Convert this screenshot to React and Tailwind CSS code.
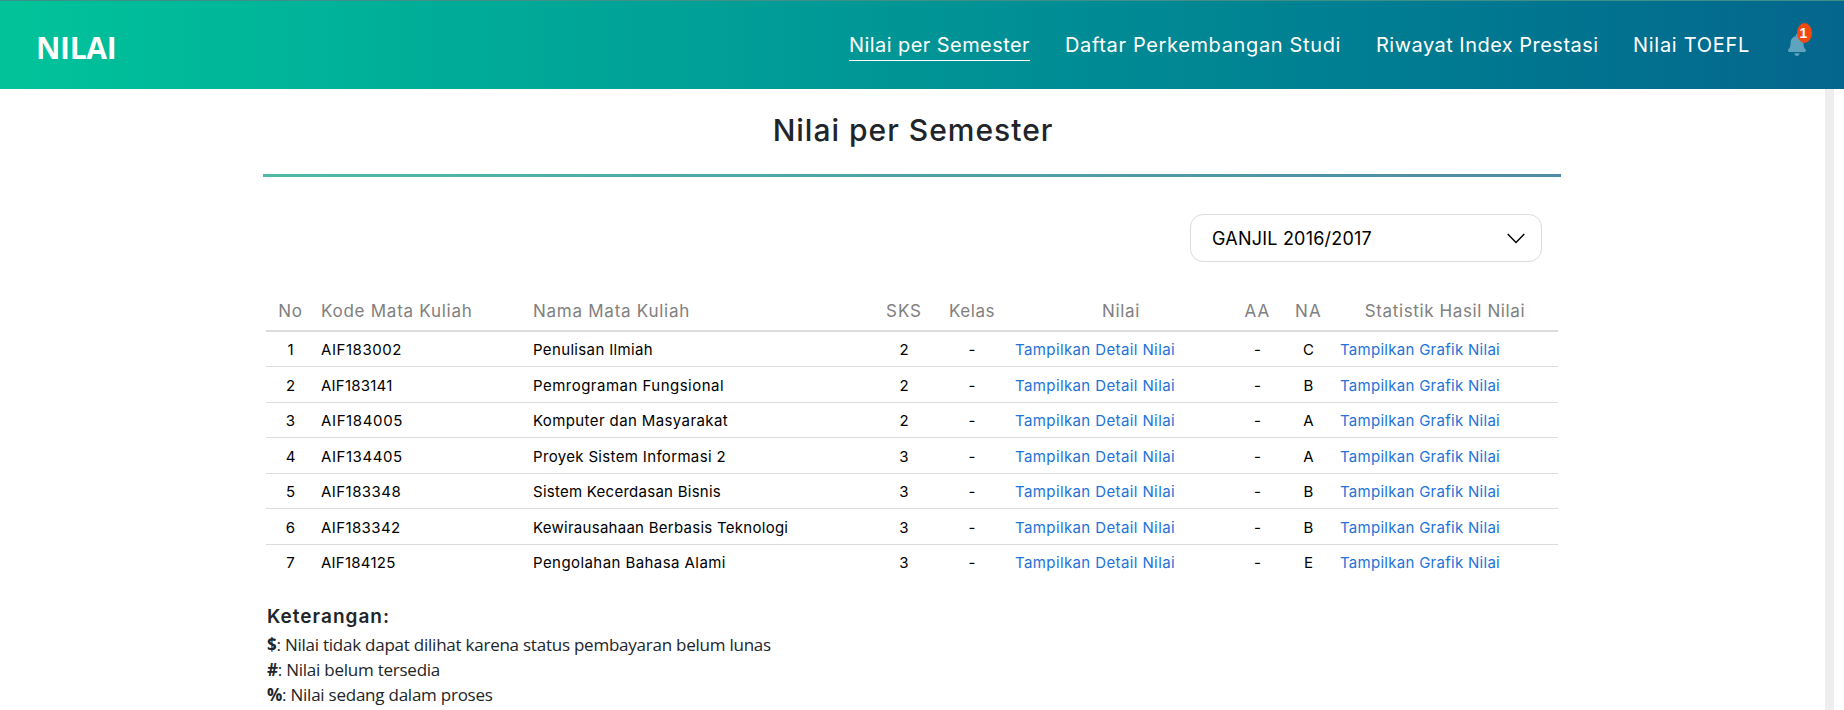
const navItems = [
  { label: "Nilai per Semester", style: "w-[181px] tracking-[0.43px]", active: true },
  { label: "Daftar Perkembangan Studi", style: "w-[276px] tracking-[0.64px]" },
  { label: "Riwayat Index Prestasi", style: "w-[222px] tracking-[0.47px]" },
  { label: "Nilai TOEFL", style: "w-[117px] tracking-[0.71px]" },
];

const rows = [
  { code: "AIF183002", codeStyle: "tracking-[0.56px]", name: "Penulisan Ilmiah", nameStyle: "tracking-[0.35px]", sks: 2, na: "C", h: "h-[35px] pt-[2px]" },
  { code: "AIF183141", codeStyle: "tracking-[0.22px]", name: "Pemrograman Fungsional", nameStyle: "tracking-[0.48px]", sks: 2, na: "B", h: "h-[36px] pt-[4px]" },
  { code: "AIF184005", codeStyle: "tracking-[0.63px]", name: "Komputer dan Masyarakat", nameStyle: "tracking-[0.39px]", sks: 2, na: "A", h: "h-[35px] pt-[2px]" },
  { code: "AIF134405", codeStyle: "tracking-[0.56px]", name: "Proyek Sistem Informasi 2", nameStyle: "tracking-[0.34px]", sks: 3, na: "A", h: "h-[36px] pt-[4px]" },
  { code: "AIF183348", codeStyle: "tracking-[0.45px]", name: "Sistem Kecerdasan Bisnis", nameStyle: "tracking-[0.26px]", sks: 3, na: "B", h: "h-[35px] pt-[2px]" },
  { code: "AIF183342", codeStyle: "tracking-[0.4px]", name: "Kewirausahaan Berbasis Teknologi", nameStyle: "tracking-[0.27px]", sks: 3, na: "B", h: "h-[36px] pt-[4px]" },
  { code: "AIF184125", codeStyle: "tracking-[0.24px]", name: "Pengolahan Bahasa Alami", nameStyle: "tracking-[0.43px]", sks: 3, na: "E", h: "h-[35px] pt-[2px]" },
];

const columns =
  "grid grid-cols-[49px_6px_212px_343px_56px_80px_218px_55px_47px_226px] items-center";

const notes = [
  { sign: "$", text: "Nilai tidak dapat dilihat karena status pembayaran belum lunas" },
  { sign: "#", text: "Nilai belum tersedia" },
  { sign: "%", text: "Nilai sedang dalam proses" },
];

function Bell() {
  return (
    <div className="relative ml-[38px] mt-[33px] h-[23px] w-[20px]">
      <svg viewBox="0 0 448 512" preserveAspectRatio="none" className="h-[22px] w-[18px] fill-[#5fa3be]">
        <path d="M224 512c35.3 0 63.9-28.600 63.900-64H160.100c0 35.400 28.600 64 63.900 64zm215.400-149.700c-19.300-20.800-55.500-52-55.500-154.300 0-77.700-54.500-139.900-127.900-155.200V32c0-17.700-14.300-32-32-32s-32 14.300-32 32v20.800C118.600 68.100 64.100 130.300 64.100 208c0 102.300-36.200 133.500-55.500 154.300-6 6.500-8.700 14.200-8.600 21.700.1 16.400 13 32 32.100 32h383.800c19.100 0 32-15.600 32.100-32 .1-7.500-2.600-15.200-8.600-21.700z" />
      </svg>
      <span className="absolute -top-[11px] left-[9px] flex h-[20px] w-[15px] items-center justify-center rounded-[50%] bg-[#f1490f] pr-[2px] font-['Liberation_Sans',sans-serif] text-[14px] font-bold leading-none text-white">
        1
      </span>
    </div>
  );
}

function Header() {
  return (
    <header className="flex h-[89px] shrink-0 justify-between border-t border-[#3d8f87] bg-gradient-to-r from-[#02c39a] to-[#05668d] pl-[36px] pr-[36px] text-white">
      <h1 className="mt-[26px] font-['Open_Sans',sans-serif] text-[30px] font-bold leading-[42px] tracking-[-0.3px]">
        NILAI
      </h1>
      <nav className="flex items-start">
        <ul className="flex gap-[35px] pt-[29px] text-[20px] leading-[30px]">
          {navItems.map((n) => (
            <li
              key={n.label}
              className={`h-[31px] whitespace-nowrap ${n.style} ${n.active ? "border-b border-white" : ""}`}
            >
              {n.label}
            </li>
          ))}
        </ul>
        <Bell />
      </nav>
    </header>
  );
}

function SemesterSelect() {
  return (
    <button className="flex h-[48px] w-[352px] items-center justify-between rounded-[13px] border border-[#dcdcdc] bg-white pl-[21px] pr-[16px] text-[18px] tracking-[0.22px] text-black">
      <span>GANJIL 2016/2017</span>
      <svg viewBox="0 0 18 11" className="h-[11px] w-[18px] fill-none stroke-black [stroke-width:1.4]">
        <path d="M0.7 1 L9 9.500 L17.300 1" />
      </svg>
    </button>
  );
}

function GradeTable() {
  return (
    <div className="w-[1292px] text-[15px] text-black">
      <div className={`${columns} h-[42px] border-b-2 border-[#dcdcdc] pt-[3px] text-[17px] text-[#808080]`}>
        <span className="text-center tracking-[0.7px]">No</span>
        <span />
        <span className="tracking-[0.74px]">Kode Mata Kuliah</span>
        <span className="tracking-[0.74px]">Nama Mata Kuliah</span>
        <span className="text-center tracking-[0.9px]">SKS</span>
        <span className="text-center tracking-[0.54px]">Kelas</span>
        <span className="text-center tracking-[0.66px]">Nilai</span>
        <span className="text-center tracking-[1.2px]">AA</span>
        <span className="text-center tracking-[1.2px]">NA</span>
        <span className="text-center tracking-[0.62px]">Statistik Hasil Nilai</span>
      </div>
      {rows.map((r, i) => (
        <div
          key={r.code}
          className={`${columns} ${r.h} ${i < rows.length - 1 ? "border-b border-[#dcdcdc]" : ""}`}
        >
          <span className="text-center">{i + 1}</span>
          <span />
          <span className={r.codeStyle}>{r.code}</span>
          <span className={r.nameStyle}>{r.name}</span>
          <span className="text-center">{r.sks}</span>
          <span className="text-center">-</span>
          <a className="pl-[3px] tracking-[0.39px] text-[#2372d9]">Tampilkan Detail Nilai</a>
          <span className="text-center">-</span>
          <span className="text-center">{r.na}</span>
          <a className="pl-[8px] tracking-[0.28px] text-[#2372d9]">Tampilkan Grafik Nilai</a>
        </div>
      ))}
    </div>
  );
}

function Legend() {
  return (
    <section className="text-[#212529]">
      <h3 className="text-[19px] font-semibold leading-[24px] tracking-[1px]">Keterangan:</h3>
      <div className="mt-[3px] font-['Open_Sans',sans-serif] text-[17px] leading-[25px] tracking-[-0.24px]">
        {notes.map((n) => (
          <p key={n.sign}>
            <b>{n.sign}</b>: {n.text}
          </p>
        ))}
      </div>
    </section>
  );
}

export default function App() {
  return (
    <div className="flex h-[710px] flex-col overflow-hidden bg-white font-['Inter','Liberation_Sans',sans-serif]">
      <Header />
      <div className="flex flex-1">
        <main className="flex w-[1825px] flex-col pl-[263px]">
          <h2 className="mt-[19px] w-[1300px] text-center text-[30px] font-medium leading-[44px] tracking-[1px] text-[#212529]">
            Nilai per Semester
          </h2>
          <div className="mt-[22px] h-[3px] w-[1298px] bg-gradient-to-r from-[#4fbaa6] to-[#4f8aa6]" />
          <div className="ml-[927px] mt-[37px]">
            <SemesterSelect />
          </div>
          <div className="ml-[3px] mt-[28px]">
            <GradeTable />
          </div>
          <div className="ml-[4px] mt-[25px]">
            <Legend />
          </div>
        </main>
        <div className="w-[9px] bg-[#eeeeee]" />
      </div>
    </div>
  );
}
